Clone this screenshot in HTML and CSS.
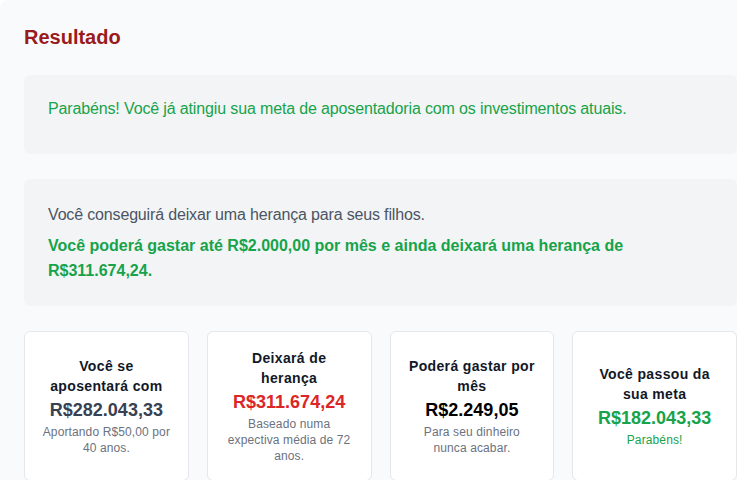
FILE: index.html
```html
<!DOCTYPE html>
<html lang="pt-BR">
<head>
<meta charset="utf-8">
<title>Resultado</title>
<link rel="stylesheet" href="styles.css">
</head>
<body>
<section class="panel">
  <h2 class="title">Resultado</h2>

  <div class="box box-goal">
    <p class="goal-text">Parabéns! Você já atingiu sua meta de aposentadoria com os investimentos atuais.</p>
  </div>

  <div class="box box-heritage">
    <p class="heritage-intro">Você conseguirá deixar uma herança para seus filhos.</p>
    <p class="heritage-detail">Você poderá gastar até R$2.000,00 por mês e ainda deixará uma herança de R$311.674,24.</p>
  </div>

  <div class="cards">
    <div class="card">
      <h3 class="card-title">Você se aposentará com</h3>
      <div class="card-value value-slate">R$282.043,33</div>
      <p class="card-desc">Aportando R$50,00 por 40 anos.</p>
    </div>
    <div class="card">
      <h3 class="card-title">Deixará de herança</h3>
      <div class="card-value value-red">R$311.674,24</div>
      <p class="card-desc">Baseado numa expectiva média de 72 anos.</p>
    </div>
    <div class="card">
      <h3 class="card-title">Poderá gastar por mês</h3>
      <div class="card-value value-black">R$2.249,05</div>
      <p class="card-desc">Para seu dinheiro nunca acabar.</p>
    </div>
    <div class="card">
      <h3 class="card-title">Você passou da sua meta</h3>
      <div class="card-value value-green">R$182.043,33</div>
      <p class="card-desc desc-green">Parabéns!</p>
    </div>
  </div>
</section>
</body>
</html>
```

FILE: styles.css
```css
html, body {
  margin: 0;
  padding: 0;
  background: #ffffff;
  overflow: hidden;
}

body {
  font-family: "Liberation Sans", Arial, sans-serif;
}

.panel {
  box-sizing: border-box;
  width: 761px;
  min-height: 480px;
  background: #f9fafb;
  border-radius: 8px;
  padding: 23px 24px 24px;
}

.title {
  margin: 0 0 24px;
  font-size: 20px;
  line-height: 28px;
  font-weight: 700;
  color: #991b1b;
}

.box {
  background: #f3f4f6;
  border-radius: 6px;
  padding: 24px;
}

.box-goal {
  padding: 22px 24px 33px;
  margin-bottom: 25px;
}

.goal-text {
  margin: 0;
  font-size: 16px;
  line-height: 24px;
  letter-spacing: -0.14px;
  color: #16a34a;
}

.box-heritage {
  padding: 24px 24px 23px;
  margin-bottom: 25px;
}

.heritage-intro {
  margin: 0 0 6px;
  font-size: 16px;
  line-height: 24px;
  letter-spacing: -0.16px;
  color: #4b5563;
}

.heritage-detail {
  margin: 0;
  font-size: 16px;
  line-height: 25px;
  font-weight: 700;
  color: #16a34a;
}

.cards {
  display: grid;
  grid-template-columns: repeat(4, 1fr);
  gap: 18px;
}

.card {
  background: #ffffff;
  border: 1px solid #e5e7eb;
  border-radius: 6px;
  padding: 16px;
  display: flex;
  flex-direction: column;
  justify-content: center;
  align-items: center;
  text-align: center;
}

.card-title {
  margin: 0;
  font-size: 14px;
  line-height: 20px;
  font-weight: 700;
  letter-spacing: 0.025em;
  color: #111827;
}

.card-value {
  font-size: 18px;
  line-height: 28px;
  font-weight: 700;
}

.value-slate { color: #374151; }
.value-red { color: #dc2626; }
.value-black { color: #000000; }
.value-green { color: #16a34a; }

.card-desc {
  margin: 0;
  font-size: 12px;
  line-height: 16px;
  color: #6b7280;
  letter-spacing: 0.01em;
}

.desc-green { color: #16a34a; }
```
